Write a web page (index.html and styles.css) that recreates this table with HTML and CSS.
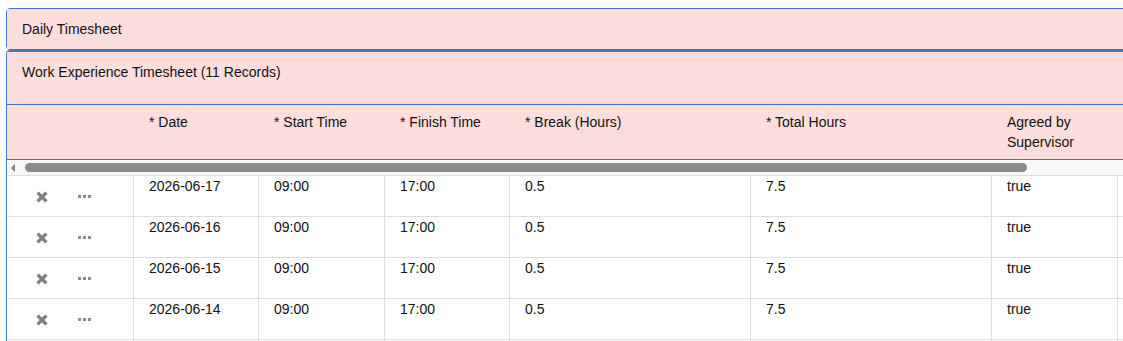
FILE: index.html
```html
<!DOCTYPE html>
<html>
<head>
<meta charset="utf-8">
<link rel="stylesheet" href="styles.css">
</head>
<body>
<div class="panel-group">
  <div class="panel panel-first">
    <div class="panel-heading">Daily Timesheet</div>
  </div>
  <div class="panel panel-second">
    <div class="panel-heading heading-tall">Work Experience Timesheet (11 Records)</div>
    <div class="grid">
      <div class="grid-row grid-head">
        <div class="cell cell-actions"></div>
        <div class="cell">* Date</div>
        <div class="cell">* Start Time</div>
        <div class="cell">* Finish Time</div>
        <div class="cell">* Break (Hours)</div>
        <div class="cell">* Total Hours</div>
        <div class="cell">Agreed by<br>Supervisor</div>
        <div class="cell"></div>
      </div>
      <div class="hscroll">
        <span class="arrow-left"></span>
        <span class="track"><span class="thumb"></span></span>
      </div>
      <div class="grid-body">
        <div class="grid-row">
          <div class="cell cell-actions">
            <svg class="ico-x" width="12" height="12" viewBox="0 0 12 12"><path d="M1.6 1.6 L10.4 10.4 M10.4 1.6 L1.6 10.4"/></svg>
            <span class="dots"><i></i><i></i><i></i></span>
          </div>
          <div class="cell">2026-06-17</div>
          <div class="cell">09:00</div>
          <div class="cell">17:00</div>
          <div class="cell">0.5</div>
          <div class="cell">7.5</div>
          <div class="cell">true</div>
          <div class="cell"></div>
        </div>
        <div class="grid-row">
          <div class="cell cell-actions">
            <svg class="ico-x" width="12" height="12" viewBox="0 0 12 12"><path d="M1.6 1.6 L10.4 10.4 M10.4 1.6 L1.6 10.4"/></svg>
            <span class="dots"><i></i><i></i><i></i></span>
          </div>
          <div class="cell">2026-06-16</div>
          <div class="cell">09:00</div>
          <div class="cell">17:00</div>
          <div class="cell">0.5</div>
          <div class="cell">7.5</div>
          <div class="cell">true</div>
          <div class="cell"></div>
        </div>
        <div class="grid-row">
          <div class="cell cell-actions">
            <svg class="ico-x" width="12" height="12" viewBox="0 0 12 12"><path d="M1.6 1.6 L10.4 10.4 M10.4 1.6 L1.6 10.4"/></svg>
            <span class="dots"><i></i><i></i><i></i></span>
          </div>
          <div class="cell">2026-06-15</div>
          <div class="cell">09:00</div>
          <div class="cell">17:00</div>
          <div class="cell">0.5</div>
          <div class="cell">7.5</div>
          <div class="cell">true</div>
          <div class="cell"></div>
        </div>
        <div class="grid-row">
          <div class="cell cell-actions">
            <svg class="ico-x" width="12" height="12" viewBox="0 0 12 12"><path d="M1.6 1.6 L10.4 10.4 M10.4 1.6 L1.6 10.4"/></svg>
            <span class="dots"><i></i><i></i><i></i></span>
          </div>
          <div class="cell">2026-06-14</div>
          <div class="cell">09:00</div>
          <div class="cell">17:00</div>
          <div class="cell">0.5</div>
          <div class="cell">7.5</div>
          <div class="cell">true</div>
          <div class="cell"></div>
        </div>
        <div class="grid-row">
          <div class="cell cell-actions"></div>
          <div class="cell"></div>
          <div class="cell"></div>
          <div class="cell"></div>
          <div class="cell"></div>
          <div class="cell"></div>
          <div class="cell"></div>
          <div class="cell"></div>
        </div>
      </div>
    </div>
  </div>
</div>
</body>
</html>
```

FILE: styles.css
```css
html, body {
  margin: 0;
  padding: 0;
  background: #ffffff;
}

body {
  padding: 8px 0 0 6px;
  width: 1117px;
  height: 333px;
  overflow: hidden;
  font-family: "Liberation Sans", Arial, sans-serif;
  font-size: 14px;
  line-height: 20px;
  color: #111111;
}

.panel-group {
  width: 1300px;
}

.panel {
  border: 1px solid #3a7abf;
  background: #fddedc;
  border-radius: 4px 0 0 4px;
}

.panel-second {
  border-top-width: 2px;
  border-bottom: none;
  border-radius: 4px 0 0 0;
  background: #ffffff;
}

.panel-heading {
  padding: 10px 15px;
  background: #fddedc;
}

.heading-tall {
  padding-bottom: 22px;
  border-bottom: 1px solid #3a7abf;
}

.grid-row {
  display: grid;
  grid-template-columns: 126px 125px 126px 125px 241px 241px 126px 190px;
}

.grid-head {
  background: #fddedc;
  height: 54px;
  border-bottom: 1px solid #3a7abf;
}

.grid-head .cell {
  padding-top: 7px;
  border-left-color: transparent;
}

.cell {
  border-left: 1px solid #dddddd;
  padding: 0 0 0 15px;
}

.cell-actions {
  border-left: none;
  padding: 0;
  display: flex;
  align-items: center;
}

.hscroll {
  height: 15px;
  background: #f8f8f8;
  display: flex;
  align-items: center;
  border-bottom: 1px solid #dddddd;
}

.arrow-left {
  width: 0;
  height: 0;
  margin-left: 4px;
  border-top: 4px solid transparent;
  border-bottom: 4px solid transparent;
  border-right: 4px solid #7d7d7d;
}

.track {
  display: block;
  margin-left: 10px;
  width: 1090px;
}

.thumb {
  display: block;
  width: 1002px;
  height: 9px;
  border-radius: 5px;
  background: #8b8b8b;
}

.grid-body .grid-row {
  height: 40px;
  border-bottom: 1px solid #dddddd;
}

.ico-x {
  display: block;
  margin-left: 29px;
  margin-top: 1px;
}

.ico-x path {
  fill: none;
  stroke: #7f7f7f;
  stroke-width: 3.4;
}

.dots {
  display: flex;
  gap: 2px;
  margin-left: 30px;
}

.dots i {
  display: block;
  width: 3px;
  height: 3px;
  background: #8a8a94;
}
```
